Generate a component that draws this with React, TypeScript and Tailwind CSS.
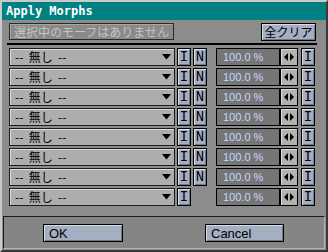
import React from "react";

const jp = { fontFamily: '"Noto Sans CJK JP", "Liberation Sans", sans-serif' };
const lat = { fontFamily: '"Liberation Sans", "Noto Sans CJK JP", sans-serif' };
const mono = { fontFamily: '"DejaVu Sans Mono", "Liberation Mono", monospace' };
const lmono = { fontFamily: '"Liberation Mono", "DejaVu Sans Mono", monospace' };

function SmallBtn({ label }: { label: string }) {
  return (
    <div
      className="w-[14px] h-[18px] bg-[#a4afc2] border border-black flex items-center justify-center text-[14px] leading-none text-black shadow-[inset_1px_1px_0_#d6dde8,inset_-1px_-1px_0_#6f7888]"
      style={lmono}
    >
      {label}
    </div>
  );
}

function WideBtn({ label, w }: { label: string; w: string }) {
  return (
    <div
      className={`${w} h-[18px] bg-[#a4afc2] border border-black flex items-center pl-[5px] text-[13px] leading-none text-black shadow-[inset_1px_1px_0_#d6dde8,inset_-1px_-1px_0_#6f7888]`}
      style={lat}
    >
      {label}
    </div>
  );
}

function Arrows() {
  return (
    <div className="w-[18px] h-[18px] bg-[#b2b2b2] border border-black flex items-center justify-center shadow-[inset_1px_1px_0_#dcdcdc]">
      <svg width="10" height="8" viewBox="0 0 10 8">
        <path d="M4 0 L0 4 L4 8 Z" fill="#000" />
        <path d="M6 0 L10 4 L6 8 Z" fill="#000" />
      </svg>
    </div>
  );
}

function Row({ n }: { n: boolean }) {
  return (
    <div className="flex h-[18px] items-stretch">
      <div
        className="w-[166px] h-[18px] bg-[#adadad] border border-[#1c1c1c] shadow-[inset_1px_1px_0_#dadada] flex items-center pl-[5px] pr-[2px] text-[12px] text-black"
        style={jp}
      >
        <span className="flex-1 leading-none whitespace-pre">--  無し  --</span>
        <svg width="9" height="6" viewBox="0 0 9 6" className="mr-[1px]">
          <path d="M0 0 L9 0 L4.5 5.5 Z" fill="#000" />
        </svg>
      </div>
      <div className="ml-[2px]">
        <SmallBtn label="I" />
      </div>
      <div className="ml-[2px] w-[14px]">{n && <SmallBtn label="N" />}</div>
      <div
        className="ml-[9px] w-[64px] h-[18px] bg-[#767676] border border-black flex items-center pl-[6px] text-[11px] text-[#c4d8fc] leading-none"
        style={lat}
      >
        100.0 %
      </div>
      <Arrows />
      <div className="ml-[3px]">
        <SmallBtn label="I" />
      </div>
    </div>
  );
}

export default function App() {
  const rows = [true, true, true, true, true, true, true, false];
  return (
    <div className="w-[328px] h-[252px] bg-[#8c8c8c] border-2 border-t-[#cacaca] border-l-[#cacaca] border-r-[#3a3a3a] border-b-[#3a3a3a] flex flex-col overflow-hidden">
      <div
        className="h-[18px] bg-[#008080] text-white font-bold text-[12px] leading-none flex items-center pl-[4px]"
        style={mono}
      >
        Apply Morphs
      </div>
      <div className="flex items-start justify-between pl-[7px] pr-[10px] mt-[3px]">
        <div
          className="w-[165px] h-[17px] bg-[#8a8a8a] border border-[#2a2a2a] shadow-[inset_1px_1px_0_#a8a8a8] flex items-center pl-[4px] text-[12px] text-[#c4c4c4] leading-none"
          style={jp}
        >
          選択中のモーフはありません
        </div>
        <div
          className="w-[55px] h-[18px] bg-[#a4afc2] border border-black shadow-[inset_1px_1px_0_#d6dde8,inset_-1px_-1px_0_#6f7888] flex items-center justify-center text-[12px] text-black leading-none"
          style={jp}
        >
          全クリア
        </div>
      </div>
      <div className="mx-[5px] mt-[2px] h-[2px] bg-black w-[310px]" />
      <div className="flex flex-col gap-[2px] pl-[7px] mt-[3px]">
        {rows.map((n, i) => (
          <Row key={i} n={n} />
        ))}
      </div>
      <div className="mx-[1px] mt-[10px] h-[33px] bg-[#858585] border border-t-[#1a1a1a] border-l-[#1a1a1a] border-r-[#b4b4b4] border-b-[#b4b4b4] flex items-start pt-[7px]">
        <div className="ml-[39px]">
          <WideBtn label="OK" w="w-[80px]" />
        </div>
        <div className="ml-[82px]">
          <WideBtn label="Cancel" w="w-[79px]" />
        </div>
      </div>
    </div>
  );
}
